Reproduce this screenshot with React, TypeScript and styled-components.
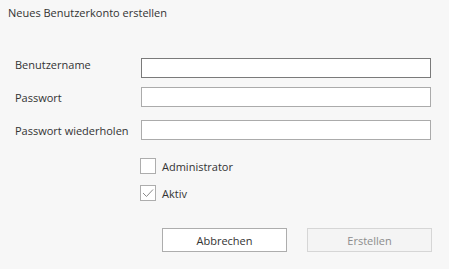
import styled, { createGlobalStyle } from 'styled-components';

const GlobalStyle = createGlobalStyle`
  html, body {
    margin: 0;
    padding: 0;
    background: #f7f7f7;
  }
  body {
    font-family: "Open Sans", "Noto Sans", sans-serif;
    font-size: 11px;
    color: #333333;
  }
`;

const Dialog = styled.div`
  width: 449px;
  height: 269px;
  box-sizing: border-box;
  padding: 5px 0 0 8px;
`;

const Title = styled.div`
  line-height: 16px;
`;

const Form = styled.div`
  display: grid;
  grid-template-columns: 126px 290px;
  padding-left: 7px;
  margin-top: 37px;
`;

const Label = styled.label<{ $shift?: number; $top?: number }>`
  display: flex;
  align-items: center;
  height: 20px;
  margin-top: ${(p) => p.$top ?? 0}px;
  position: relative;
  top: ${(p) => p.$shift ?? 0}px;
`;

const Input = styled.input<{ $focused?: boolean; $top?: number }>`
  box-sizing: border-box;
  height: 20px;
  width: 290px;
  margin: ${(p) => p.$top ?? 0}px 0 0 0;
  padding: 0 4px;
  background: #ffffff;
  border: 1px solid ${(p) => (p.$focused ? '#7a7a7a' : '#ababab')};
  outline: none;
  font: inherit;
`;

const Checks = styled.div`
  display: flex;
  flex-direction: column;
  gap: 11px;
  margin: 18px 0 0 132px;
`;

const CheckRow = styled.div`
  display: flex;
  align-items: center;
  gap: 6px;
  height: 16px;
`;

const Box = styled.span`
  box-sizing: border-box;
  width: 16px;
  height: 16px;
  border: 1px solid #adadad;
  background: #ffffff;
  display: flex;
  align-items: center;
  justify-content: center;
`;

const Buttons = styled.div`
  display: flex;
  gap: 20px;
  margin: 27px 0 0 154px;
`;

const Button = styled.button<{ $disabled?: boolean }>`
  box-sizing: border-box;
  width: 125px;
  height: 24px;
  font: inherit;
  color: ${(p) => (p.$disabled ? '#8c8c8c' : '#333333')};
  background: ${(p) => (p.$disabled ? '#f4f4f4' : '#ffffff')};
  border: 1px solid ${(p) => (p.$disabled ? '#d6d6d6' : '#adadad')};
  padding: 0;
`;

const Check = () => (
  <svg width="14" height="14" viewBox="0 0 14 14">
    <path d="M2 7 L5.5 10.5 L12 3.5" fill="none" stroke="#8a8a8a" strokeWidth="1" />
  </svg>
);

export default function App() {
  return (
    <>
      <GlobalStyle />
      <Dialog>
        <Title>Neues Benutzerkonto erstellen</Title>
        <Form>
          <Label $shift={-4}>Benutzername</Label>
          <Input $focused />
          <Label $top={9}>Passwort</Label>
          <Input $top={9} />
          <Label $top={13}>Passwort wiederholen</Label>
          <Input $top={13} />
        </Form>
        <Checks>
          <CheckRow>
            <Box />
            Administrator
          </CheckRow>
          <CheckRow>
            <Box>
              <Check />
            </Box>
            Aktiv
          </CheckRow>
        </Checks>
        <Buttons>
          <Button>Abbrechen</Button>
          <Button $disabled disabled>
            Erstellen
          </Button>
        </Buttons>
      </Dialog>
    </>
  );
}
